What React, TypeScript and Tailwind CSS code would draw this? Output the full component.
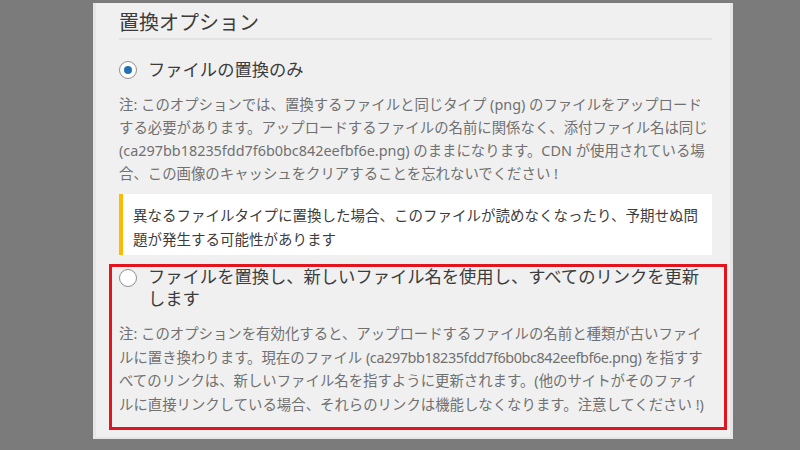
export default function App() {
  return (
    <div
      className="w-[800px] h-[450px] bg-[#7b7b7b] overflow-hidden pt-[3px] pl-[93px]"
      style={{ fontFamily: '"Noto Sans", "Noto Sans CJK JP", sans-serif' }}
    >
      <div className="w-[640px] h-[436px] bg-[#f0f0f0] border-l-[3px] border-r-[3px] border-b-[2px] border-[#e6e6e6] pl-[23px] pr-[18px]">
        {/* 見出し */}
        <h2 className="text-[20px] leading-[28px] pt-[6px] text-[#3c3c3c]">置換オプション</h2>
        <div className="h-[2px] bg-[#e2e2e2] mt-[1px]" />

        {/* オプション1 */}
        <label className="flex items-center gap-[11px] mt-[18px] h-[24px]">
          <span className="w-[18px] h-[18px] rounded-full border border-[#8c8f94] bg-white flex items-center justify-center shrink-0">
            <span className="w-[8px] h-[8px] rounded-full bg-[#2271b1]" />
          </span>
          <span className="text-[17.3px] leading-[24px] text-[#3c3c3c]">ファイルの置換のみ</span>
        </label>
        <p className="mt-[11px] text-[14.4px] leading-[23px] text-[#707070]">
          注: このオプションでは、置換するファイルと同じタイプ (png) のファイルをアップロードする必要があります。アップロードするファイルの名前に関係なく、添付ファイル名は同じ (ca297bb18235fdd7f6b0bc842eefbf6e.png) のままになります。CDN が使用されている場合、この画像のキャッシュをクリアすることを忘れないでください !
        </p>

        {/* 警告 */}
        <div className="mt-[9px] bg-white border-l-4 border-[#ffb900] pl-[10px] pr-[4px] pt-[9px] pb-[4px] text-[14.5px] leading-[24px] text-[#3c3c3c]">
          異なるファイルタイプに置換した場合、このファイルが読めなくなったり、予期せぬ問題が発生する可能性があります
        </div>

        {/* オプション2 */}
        <div className="mt-[9px] -ml-[10px] -mr-[15px] border-[3px] border-[#e4141f] pl-[7px] pr-[14px] h-[166px]">
          <label className="flex items-start gap-[11px] -mt-[1px]">
            <span className="mt-[3px] w-[18px] h-[18px] rounded-full border border-[#8c8f94] bg-white shrink-0" />
            <span className="text-[17.3px] leading-[22px] text-[#3c3c3c]">
              ファイルを置換し、新しいファイル名を使用し、すべてのリンクを更新します
            </span>
          </label>
          <p className="mt-[12px] text-[14.4px] leading-[23.5px] text-[#707070]">
            注: このオプションを有効化すると、アップロードするファイルの名前と種類が古いファイルに置き換わります。現在のファイル{' '}
            <span className="tracking-[-0.4px]">(ca297bb18235fdd7f6b0bc842eefbf6e.png)</span> を指すすべてのリンクは、新しいファイル名を指すように更新されます。(他のサイトがそのファイルに直接リンクしている場合、それらのリンクは機能しなくなります。注意してください !)
          </p>
        </div>
      </div>
    </div>
  );
}
